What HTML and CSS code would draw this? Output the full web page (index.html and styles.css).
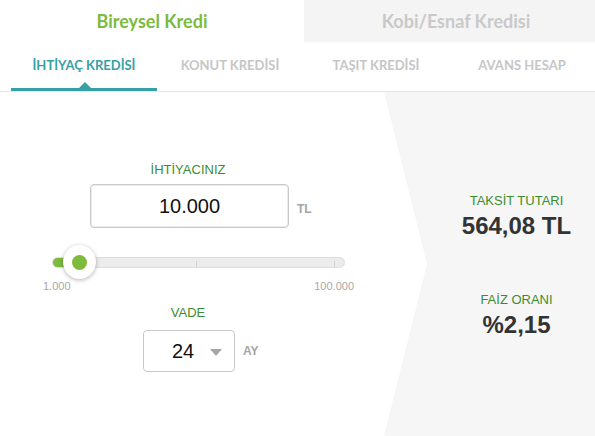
FILE: index.html
```html
<!DOCTYPE html>
<html lang="tr">
<head>
<meta charset="utf-8">
<title>Kredi Hesaplama</title>
<link rel="stylesheet" href="styles.css">
</head>
<body>
<div class="calc">
  <div class="main-tabs">
    <div class="mtab active">Bireysel Kredi</div>
    <div class="mtab">Kobi/Esnaf Kredisi</div>
  </div>
  <div class="sub-tabs">
    <div class="stab active">İHTİYAÇ KREDİSİ</div>
    <div class="stab">KONUT KREDİSİ</div>
    <div class="stab">TAŞIT KREDİSİ</div>
    <div class="stab">AVANS HESAP</div>
  </div>
  <div class="content">
    <div class="form">
      <div class="field-label first">İHTİYACINIZ</div>
      <div class="input-row">
        <div class="amount-box">10.000</div>
        <span class="unit">TL</span>
      </div>
      <div class="slider">
        <div class="track">
          <div class="fill"></div>
          <span class="tick tick-mid"></span>
          <span class="tick tick-end"></span>
        </div>
        <div class="handle"><span class="dot"></span></div>
      </div>
      <div class="range-labels">
        <span>1.000</span>
        <span>100.000</span>
      </div>
      <div class="field-label vade">VADE</div>
      <div class="select-row">
        <div class="select-box">
          <span class="select-val">24</span>
          <span class="caret"></span>
        </div>
        <span class="unit">AY</span>
      </div>
    </div>
    <div class="result">
      <div class="res-label">TAKSİT TUTARI</div>
      <div class="res-value">564,08 TL</div>
      <div class="res-label second">FAİZ ORANI</div>
      <div class="res-value">%2,15</div>
    </div>
  </div>
</div>
</body>
</html>
```
FILE: styles.css
```css
* { box-sizing: border-box; }
html, body { margin: 0; padding: 0; background: #fff; }
body { font-family: "Liberation Sans", Arial, sans-serif; }

.calc { width: 595px; height: 436px; overflow: hidden; }

.main-tabs { display: flex; height: 42px; width: 608px; }
.mtab {
  width: 304px;
  display: flex; align-items: center; justify-content: center;
  font-family: Lato, "Open Sans", sans-serif;
  font-weight: 700;
  font-size: 18px;
  color: #c9c9c9;
  background: #f4f4f4;
  padding-bottom: 1px;
}
.mtab.active { background: #fff; color: #7dbb3c; }

.sub-tabs {
  display: flex;
  height: 50px;
  padding-left: 11px;
  border-bottom: 1px solid #e6e6e6;
}
.stab {
  width: 146px;
  position: relative;
  display: flex; align-items: center; justify-content: center;
  padding-bottom: 3px;
  font-family: Lato, "Open Sans", sans-serif;
  font-weight: 700;
  font-size: 13px;
  color: #c6c6c6;
}
.stab.active { color: #37a0a6; border-bottom: 3px solid #37a0a6; padding-bottom: 0; }
.stab.active::after {
  content: "";
  position: absolute;
  left: 68px; bottom: 0;
  border-left: 6px solid transparent;
  border-right: 6px solid transparent;
  border-bottom: 6px solid #37a0a6;
}

.content { display: flex; height: 344px; }
.form { width: 384px; padding-top: 70px; }

.field-label {
  text-align: center;
  width: 376px;
  font-size: 13px;
  line-height: 16px;
  color: #3c8d2f;
}
.field-label.vade { margin-top: 12px; }

.input-row { display: flex; align-items: center; margin-top: 6px; padding-left: 90px; }
.amount-box {
  width: 199px; height: 44px;
  border: 1px solid #c9c9c9;
  border-radius: 4px;
  box-shadow: inset 0 0 0 1px #ececec;
  display: flex; align-items: center; justify-content: center;
  font-size: 20px;
  color: #111;
}
.unit { margin-left: 8px; font-size: 12px; font-weight: 700; color: #a5a5a5; padding-top: 6px; }

.slider { position: relative; margin: 17px 0 0 52px; width: 293px; height: 34px; display: flex; align-items: center; }
.track {
  position: relative;
  width: 293px; height: 11px;
  background: #ececec;
  border: 1px solid #dedede;
  border-radius: 6px;
  overflow: hidden;
}
.fill { width: 28px; height: 100%; background: #7dbb3c; }
.tick { position: absolute; top: 3px; width: 1px; height: 6px; background: #d2d2d2; }
.tick-mid { left: 143px; }
.tick-end { left: 281px; }
.handle {
  position: absolute;
  left: 11px; top: 0;
  width: 33px; height: 34px;
  border-radius: 50%;
  background: #fff;
  box-shadow: 0 1px 4px rgba(0,0,0,0.3);
  display: flex; align-items: center; justify-content: center;
}
.dot { width: 15px; height: 15px; border-radius: 50%; background: #7dbb3c; }

.range-labels {
  display: flex; justify-content: space-between;
  margin: 1px 0 0 43px; width: 311px;
  font-size: 11px; line-height: 13px; color: #a8a8a8;
}

.select-row { display: flex; align-items: center; margin-top: 9px; padding-left: 143px; }
.select-box {
  width: 92px; height: 42px;
  border: 1px solid #c9c9c9;
  border-radius: 4px;
  display: flex; align-items: center;
  padding-left: 28px;
}
.select-val { font-size: 20px; color: #111; width: 38px; }
.caret {
  border-left: 6px solid transparent;
  border-right: 6px solid transparent;
  border-top: 7px solid #a5a5a5;
  margin-top: 2px;
}
.select-row .unit { padding-top: 0; }

.result {
  width: 211px;
  background: #f6f6f6;
  clip-path: polygon(0 0, 100% 0, 100% 100%, 0 100%, 43px 50%);
  padding: 101px 0 0 54px;
  text-align: center;
}
.res-label { font-size: 13px; line-height: 16px; color: #3c8d2f; }
.res-label.second { margin-top: 52px; }
.res-value { margin-top: 3px; font-size: 24px; line-height: 28px; font-weight: 700; color: #333; }
```
